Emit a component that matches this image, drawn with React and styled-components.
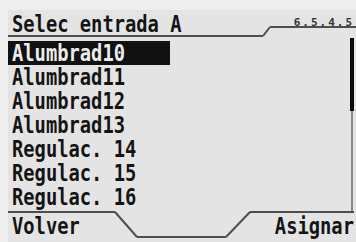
import React from "react"
import styled, { createGlobalStyle } from "styled-components"

const items = [
  "Alumbrad10",
  "Alumbrad11",
  "Alumbrad12",
  "Alumbrad13",
  "Regulac. 14",
  "Regulac. 15",
  "Regulac. 16",
]

export default () => (
  <>
    <GlobalStyle />
    <Screen>
      <Header>
        <TitleTab>
          <Label>Selec entrada A</Label>
        </TitleTab>
        <Slant width="7" height="27" viewBox="0 0 7 27">
          <line x1="0" y1="26" x2="7" y2="17" />
        </Slant>
        <VersionTab>
          <Version>6.5.4.5</Version>
        </VersionTab>
      </Header>

      <Body>
        <List>
          {items.map((item, i) => (
            <Row key={item} $selected={i === 0}>
              <Label>{item}</Label>
            </Row>
          ))}
        </List>
        <Scrollbar>
          <Thumb />
        </Scrollbar>
      </Body>

      <Footer>
        <SoftKey $width="107px">
          <Label>Volver</Label>
        </SoftKey>
        <Slant width="22" height="31" viewBox="0 0 22 31">
          <line x1="0" y1="1" x2="22" y2="26" />
        </Slant>
        <Notch />
        <Slant width="24" height="31" viewBox="0 0 24 31">
          <line x1="0" y1="26" x2="24" y2="1" />
        </Slant>
        <SoftKey $right>
          <Label $right>Asignar</Label>
        </SoftKey>
      </Footer>
    </Screen>
  </>
)

const GlobalStyle = createGlobalStyle`
  body {
    margin: 0;
    background: #eeeeee;
  }
`

const Screen = styled.div`
  width: 348px;
  height: 232px;
  margin: 10px 0 0 8px;
  background: #e4e4e4;
  display: flex;
  flex-direction: column;
  font-family: "DejaVu Sans Mono", "Liberation Mono", monospace;
  font-weight: bold;
  color: #141414;
  overflow: hidden;
`

// LCD font: tall and narrow, so the mono face is squeezed sideways
const Label = styled.span`
  display: inline-block;
  font-size: 23px;
  line-height: 21px;
  white-space: pre;
  transform: scaleX(0.816);
  transform-origin: ${props => (props.$right ? "right" : "left")} center;
`

const Header = styled.div`
  display: flex;
  height: 27px;
  flex: 0 0 auto;
`

const TitleTab = styled.div`
  box-sizing: border-box;
  width: 255px;
  height: 27px;
  padding: 4px 0 0 4px;
  border-bottom: 2px solid #4e4e4e;
`

const Slant = styled.svg`
  flex: 0 0 auto;
  display: block;
  overflow: visible;
  stroke: #4e4e4e;
  stroke-width: 2;
`

const VersionTab = styled.div`
  flex: 1;
  box-sizing: border-box;
  height: 18px;
  padding: 1px 2px 0 0;
  border-bottom: 2px solid #4e4e4e;
  text-align: right;
`

const Version = styled.span`
  font-size: 11px;
  line-height: 12px;
  letter-spacing: 2px;
  color: #333;
`

const Body = styled.div`
  flex: 1;
  display: flex;
  justify-content: space-between;
  align-items: stretch;
  min-height: 0;
`

const List = styled.div`
  width: 162px;
  padding-top: 4px;
  display: flex;
  flex-direction: column;
`

const Row = styled.div`
  height: 24px;
  padding: 2px 0 0 4px;
  box-sizing: border-box;
  background: ${props => (props.$selected ? "#111" : "transparent")};
  color: ${props => (props.$selected ? "#ececec" : "#141414")};
`

const Scrollbar = styled.div`
  width: 4px;
  margin: 1px 2px 0 0;
  background: linear-gradient(
    to right,
    transparent 1px,
    #8c8c8c 1px,
    #8c8c8c 3px,
    transparent 3px
  );
`

const Thumb = styled.div`
  height: 73px;
  background: #0c0c0c;
`

const Footer = styled.div`
  display: flex;
  height: 31px;
  flex: 0 0 auto;
`

const SoftKey = styled.div`
  box-sizing: border-box;
  ${props => (props.$width ? `width: ${props.$width};` : "flex: 1;")}
  height: 31px;
  margin-right: ${props => (props.$right ? "2px" : "0")};
  padding: ${props => (props.$right ? "3px 0 0 0" : "3px 0 0 4px")};
  border-top: 2px solid #4e4e4e;
  text-align: ${props => (props.$right ? "right" : "left")};
`

const Notch = styled.div`
  width: 89px;
  margin-top: 25px;
  border-top: 2px solid #4e4e4e;
`
